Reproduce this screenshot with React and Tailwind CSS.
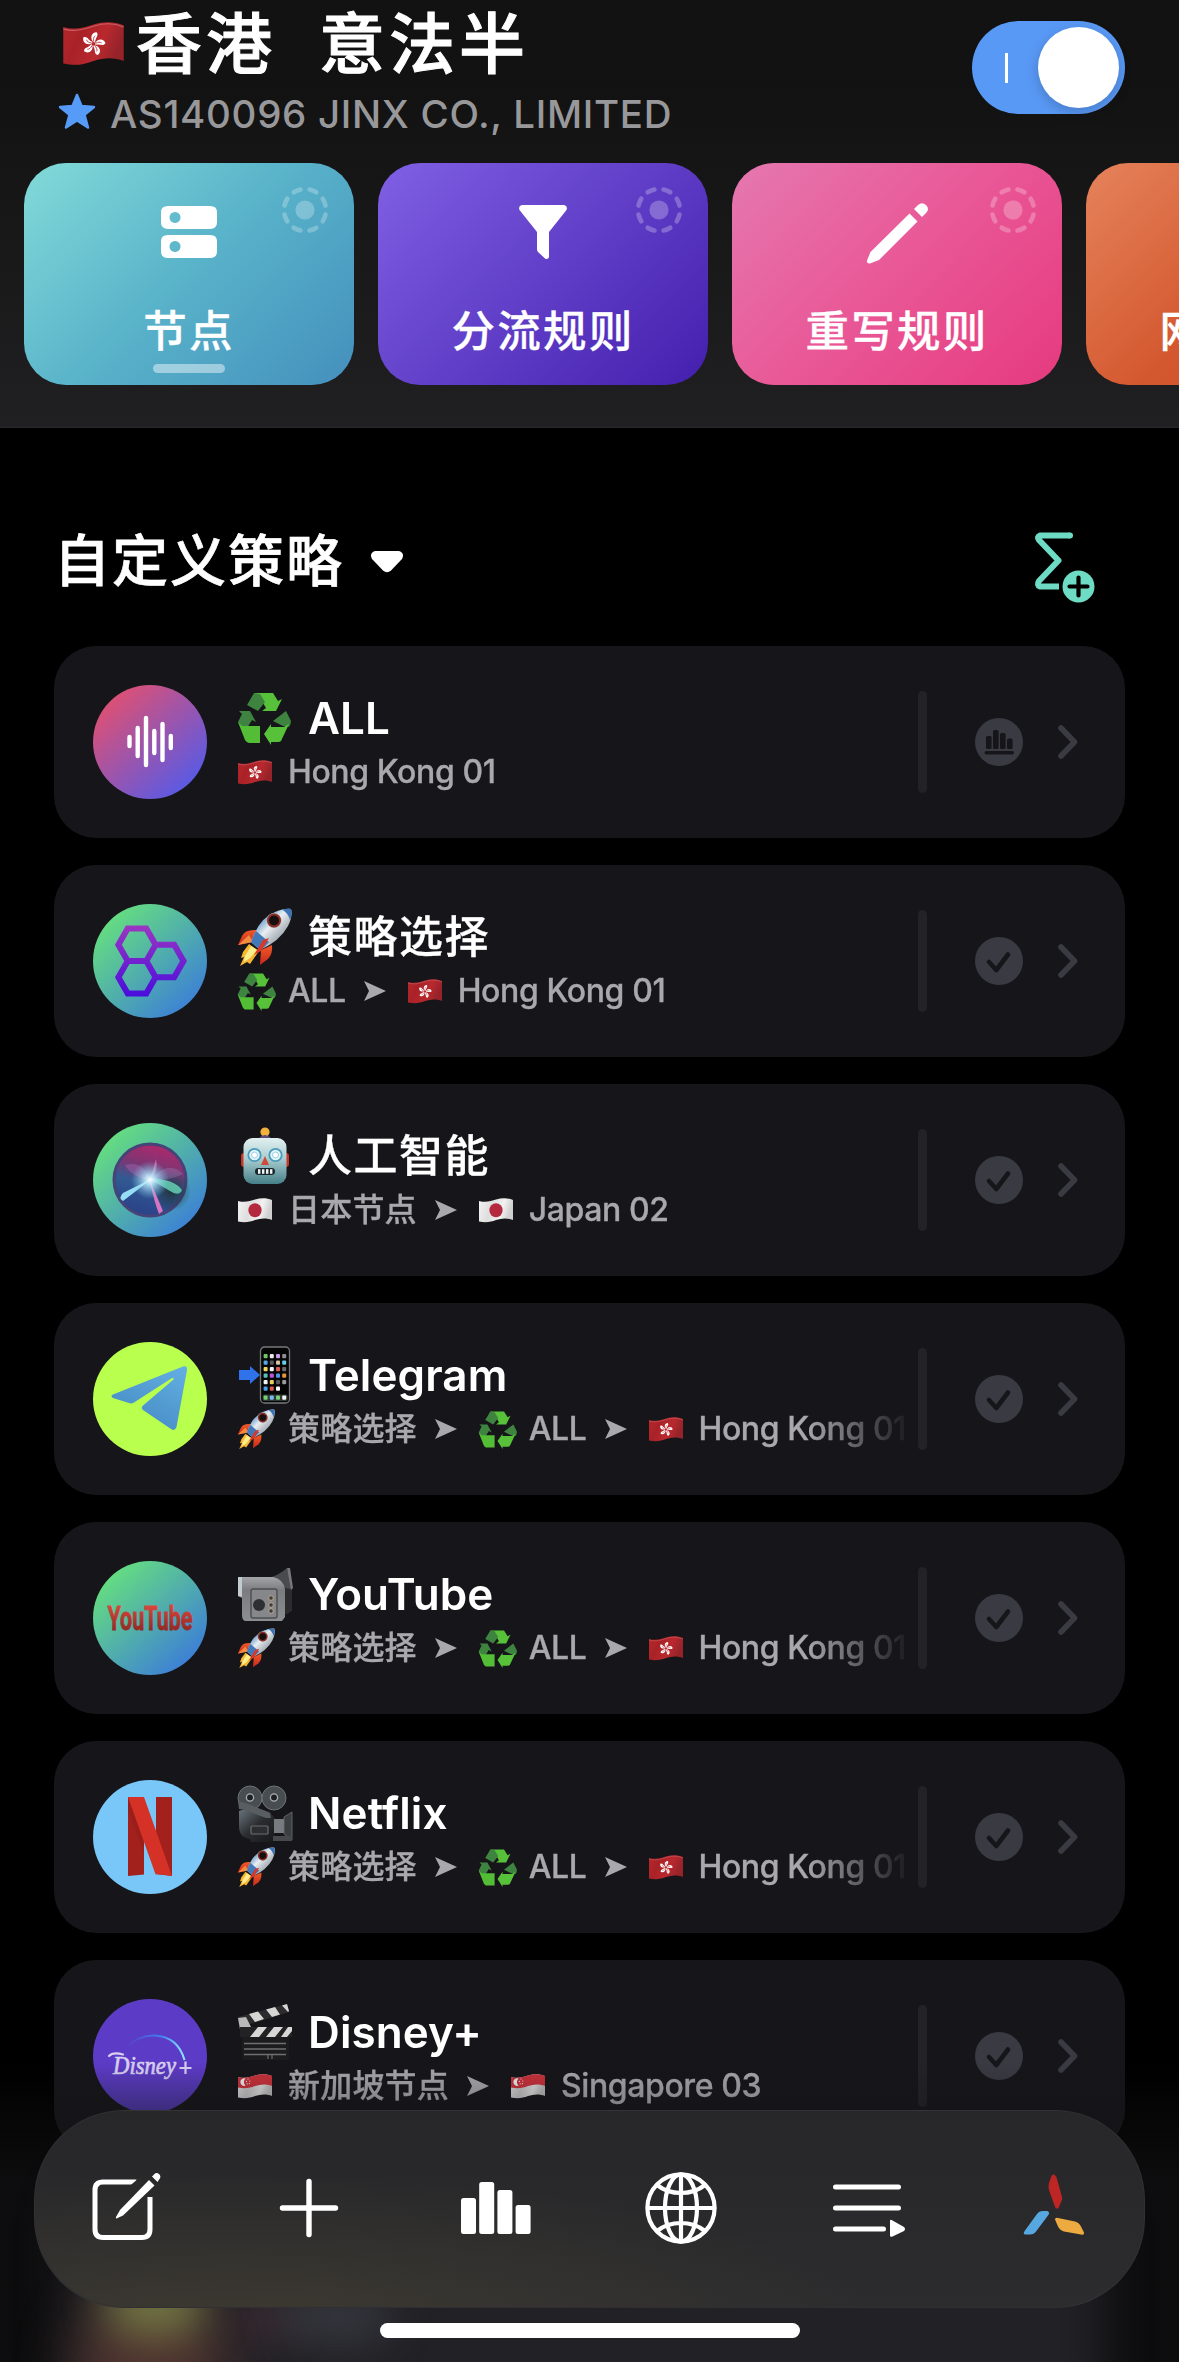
import React from "react";

const FONT = "font-['Inter','Noto_Sans_CJK_SC',sans-serif]";

/* ---------- flags and emoji ---------- */

const WAVE = "M1 4 C8 6 13 4 18 2.5 C24 .6 30 .8 35 3 V23 C30 21 24 21 18 23 C13 25 8 26 1 24.5Z";

function FlagHK({ className }) {
  return (
    <svg viewBox="0 0 36 27" className={className}>
      <defs>
        <linearGradient id="hk" x1="0" y1="0" x2="1" y2="0.3">
          <stop offset="0" stopColor="#b5272c" />
          <stop offset="0.35" stopColor="#a92227" />
          <stop offset="0.7" stopColor="#b9292e" />
          <stop offset="1" stopColor="#97232a" />
        </linearGradient>
      </defs>
      <path d={WAVE} fill="url(#hk)" />
      <path d="M1 5 C8 7 13 5 18 3.5 C24 1.6 30 1.8 35 4" fill="none" stroke="#d4777b" strokeWidth="0.6" opacity="0.7" />
      {[0, 72, 144, 216, 288].map((a) => (
        <g key={a} transform={`translate(18 13.4) rotate(${a + 8}) scale(0.86)`}>
          <path d="M0 -1 C-3 -3 -2.6 -7.2 1 -7.8 C3 -5.8 0.6 -4.6 0.9 -1.2Z" fill="#fff" />
          <path d="M0 -1.4 C-.8 -3 -.4 -4.6 .4 -5.4" fill="none" stroke="#b5272c" strokeWidth="0.5" />
        </g>
      ))}
    </svg>
  );
}

function FlagJP({ className }) {
  return (
    <svg viewBox="0 0 36 27" className={className}>
      <defs>
        <linearGradient id="jp" x1="0" y1="0" x2="1" y2="0.2">
          <stop offset="0" stopColor="#f4f4f4" />
          <stop offset="0.4" stopColor="#dedede" />
          <stop offset="0.75" stopColor="#f1f1f1" />
          <stop offset="1" stopColor="#cfcfcf" />
        </linearGradient>
      </defs>
      <path d={WAVE} fill="url(#jp)" />
      <ellipse cx="18" cy="13.3" rx="6.6" ry="7" fill="#b5293f" />
    </svg>
  );
}

function FlagSG({ className }) {
  return (
    <svg viewBox="0 0 36 27" className={className}>
      <defs>
        <linearGradient id="sgw" x1="0" y1="0" x2="1" y2="0.2">
          <stop offset="0" stopColor="#dedede" />
          <stop offset="0.4" stopColor="#c4c3c4" />
          <stop offset="0.75" stopColor="#dddddd" />
          <stop offset="1" stopColor="#b9b9b9" />
        </linearGradient>
      </defs>
      <path d={WAVE} fill="url(#sgw)" />
      <path d="M1 4 C8 6 13 4 18 2.5 C24 .6 30 .8 35 3 V13 C30 11 24 11 18 13 C13 15 8 16 1 14.5Z" fill="#c8323b" />
      <path d="M8.6 5.6 A3.8 3.8 0 1 0 8.6 12.6 A4.4 4.4 0 0 1 8.6 5.6Z" fill="#eee" />
      {[[11, 6], [9.4, 8.4], [12.8, 8], [10.2, 10.8], [12.4, 10.6]].map(([x, y]) => (
        <circle key={`${x}-${y}`} cx={x} cy={y} r="0.6" fill="#eee" />
      ))}
    </svg>
  );
}

function Recycle({ className }) {
  return (
    <svg viewBox="0 0 54 54" className={className}>
      <path d="M17 2 H36 L41 10 L45 8 L39 20 H25 L29 17 L22 5Z" fill="#57c139" />
      <path d="M17 2 L23 3 L28 11 L21 20 L10 14Z" fill="#3f8341" />
      <path d="M2 20 L13 20 L19 31 L15 29 L10 37 H4 L1 31 L5 23Z" fill="#3f8341" />
      <path d="M1 31 L5 35 H23 V52 H12 Q10 52 8 49Z" fill="#52bd35" />
      <path d="M49 20 L54 30 Q54 33 52 36 L46 35 L36 30Z" fill="#3f8341" />
      <path d="M52 33 L44 50 Q43 51 41 51 H34 V54 L27 43 L34 33 V36 H47Z" fill="#57c139" />
    </svg>
  );
}

function Rocket({ className }) {
  return (
    <svg viewBox="0 0 56 58" className={className}>
      <defs>
        <linearGradient id="rk" x1="0" y1="0" x2="1" y2="1">
          <stop offset="0.2" stopColor="#4a86bd" />
          <stop offset="0.45" stopColor="#e9eef2" />
          <stop offset="0.62" stopColor="#b9c0c6" />
          <stop offset="0.85" stopColor="#8795a5" />
        </linearGradient>
        <linearGradient id="rf" x1="0" y1="0" x2="0" y2="1">
          <stop offset="0" stopColor="#f05a28" />
          <stop offset="1" stopColor="#c9261c" />
        </linearGradient>
      </defs>
      <path d="M20 22 Q8 21 5 28 L1 37 L16 34Z" fill="url(#rf)" />
      <path d="M35 37 Q36 46 31 51 L23 57 L24 42Z" fill="url(#rf)" />
      <path d="M1 37 L12 27 L16 34Z" fill="#f58a3c" />
      <path d="M12 36 L6 44 L4 50 L7 49 L3 58 L10 54 L13 56 L22 43Z" fill="#f8b632" />
      <path d="M14 38 L8 48 L7 54 L13 50 L20 42Z" fill="#fdee8d" />
      <path d="M14 34 Q22 10 38 4 Q48 0 54 1 Q56 8 51 18 Q43 33 23 42Z" fill="url(#rk)" />
      <path d="M45 1.6 Q50 .4 54 1 Q55.5 6 53 12 Q51 5 45 1.6Z" fill="#3b73b4" />
      <path d="M14 34 Q16 28 19 23 L32 34 Q28 39 23 42Z" fill="#4379b8" />
      <circle cx="37" cy="12.5" r="7.4" fill="#a6a9ae" />
      <circle cx="37" cy="12.5" r="6" fill="#17100f" stroke="#8c2d25" strokeWidth="2" />
      <path d="M26 32 L17 47 L24 43 L32 30Z" fill="#d8372a" />
    </svg>
  );
}

function Robot({ className }) {
  return (
    <svg viewBox="0 0 56 58" className={className}>
      <defs>
        <linearGradient id="rb" x1="0" y1="0" x2="0" y2="1">
          <stop offset="0" stopColor="#e2f0f0" />
          <stop offset="0.45" stopColor="#a9cdd0" />
          <stop offset="1" stopColor="#467f88" />
        </linearGradient>
      </defs>
      <rect x="4" y="26" width="48" height="14" rx="3" fill="#c93429" />
      <circle cx="28" cy="5" r="4.6" fill="#f3b13c" />
      <path d="M22 11 Q28 5 34 11 V14 H22Z" fill="#5f4a75" />
      <rect x="6.5" y="11" width="43" height="46" rx="9" fill="url(#rb)" />
      {[17.5, 38.5].map((x) => (
        <g key={x}>
          <circle cx={x} cy="28" r="6.2" fill="#dff5fb" stroke="#4b9ab9" strokeWidth="1.8" />
          <circle cx={x} cy="28" r="3" fill="#fff" stroke="#9dd0e2" strokeWidth="1" />
        </g>
      ))}
      <path d="M28 29 L32 38 H24Z" fill="#ce4a3a" />
      <rect x="18" y="41" width="20" height="7" rx="3.4" fill="#16282c" />
      {[21, 25, 29, 33].map((x) => (
        <rect key={x} x={x} y="42.2" width="2.4" height="4.6" fill="#f4f4f4" />
      ))}
    </svg>
  );
}

const APP_COLORS = [
  "#72c465", "#e9e9e9", "#c79be6", "#8f8f92", "#54a9e8", "#5a5a5e", "#d5c2a4", "#63cfe8",
  "#f2d65d", "#f5f5f5", "#dd5b50", "#6b6b6e", "#58bdbb", "#bd55d8", "#5393e4", "#e6943a",
  "#f0f0f0", "#e8ce60", "#57575a", "#98989a", "#4c9fe8", "#dc5b4c", "#ffffff", "#050505",
];

function PhoneArrow({ className }) {
  return (
    <svg viewBox="0 0 56 58" className={className}>
      <rect x="23.5" y="1" width="29" height="56" rx="4" fill="#050505" stroke="#77787a" strokeWidth="1.3" />
      {APP_COLORS.map((c, i) => (
        <rect key={i} x={26.6 + (i % 4) * 6.2} y={8 + Math.floor(i / 4) * 6.5} width="4" height="4.3" rx="1" fill={c} />
      ))}
      <rect x="25.6" y="48.5" width="25" height="6.5" rx="1.5" fill="#2c3a33" />
      {["#77cf75", "#7ab8ef", "#7ed07a", "#f3f3f3"].map((c, i) => (
        <rect key={c + i} x={26.6 + i * 6.2} y="49.6" width="4" height="4.2" rx="1" fill={c} />
      ))}
      <path d="M2 24 H13 V20 L23 29 L13 38 V34 H2Z" fill="#2f72ea" />
    </svg>
  );
}

function Camcorder({ className }) {
  return (
    <svg viewBox="0 0 56 58" className={className}>
      <defs>
        <linearGradient id="cc" x1="0" y1="0" x2="0" y2="1">
          <stop offset="0" stopColor="#a3a5a8" />
          <stop offset="0.3" stopColor="#7a7c80" />
          <stop offset="1" stopColor="#8c8e91" />
        </linearGradient>
      </defs>
      <path d="M47 22 H55 V46 L50 49 H46Z" fill="#2c2c2f" />
      <path d="M32 13 Q42 10 50 3 L55 24 Q47 24 43 19 L33 18Z" fill="#4a4b4e" />
      <path d="M50 3 L53 3 L56 23 L54 25Z" fill="#77787b" />
      <path d="M1 12 H36 Q46 14 48 24 V52 L45 56 H8 Q5 55 5 50 V33 L1 31Z" fill="url(#cc)" />
      <path d="M1 12 H5 V32 L1 31Z" fill="#c3cbd2" />
      <rect x="14" y="24" width="26" height="29" rx="2" fill="#85878a" stroke="#4c4d50" strokeWidth="1.4" />
      <circle cx="22" cy="40" r="6" fill="#2e2f32" />
      {[33, 40, 46].map((y) => (
        <circle key={y} cx="34" cy={y} r="2.3" fill="#3d3e40" stroke="#c9b28c" strokeWidth="0.8" />
      ))}
    </svg>
  );
}

function MovieCamera({ className }) {
  return (
    <svg viewBox="0 0 56 58" className={className}>
      <defs>
        <linearGradient id="mc" x1="0" y1="0" x2="1" y2="1">
          <stop offset="0" stopColor="#6c7780" />
          <stop offset="0.5" stopColor="#2a2c2f" />
          <stop offset="1" stopColor="#18191b" />
        </linearGradient>
      </defs>
      <circle cx="13" cy="14" r="12" fill="#474d51" stroke="#6d7377" />
      <circle cx="37" cy="14" r="12" fill="#474d51" stroke="#6d7377" />
      <circle cx="13" cy="13.5" r="3.6" fill="#1e2022" stroke="#aab0b4" strokeWidth="1.3" />
      <circle cx="37" cy="13.5" r="3.6" fill="#1e2022" stroke="#aab0b4" strokeWidth="1.3" />
      <path d="M2 27 Q14 21 33 28 L38 35 V56 L34 58 H14 L13 55 Q2 54 2 42Z" fill="url(#mc)" />
      <path d="M1 17 L14 21 L33 29 L34 34 L29 34 L8 26 L2 25Z" fill="#585e62" />
      <rect x="37" y="35" width="11" height="14" fill="#777c80" />
      <path d="M47 33 L55 28 V56 L47 50Z" fill="#3b3e41" stroke="#6c7073" strokeWidth="0.8" />
      <path d="M36 52 H55 V57 H36Z" fill="#47494c" />
      <rect x="14" y="42" width="17" height="8" rx="1" fill="#2c2e30" stroke="#6a6c6f" strokeWidth="1.2" />
    </svg>
  );
}

function Clapper({ className }) {
  return (
    <svg viewBox="0 0 56 58" className={className}>
      <path d="M1 14 L50 1 L52 9 L4 24Z" fill="#2c2c2e" />
      <path d="M12 11 L21 8.5 L27 16 L18 19Z M29 6.4 L38 4 L43 11.5 L35 14Z M45 2.6 L50 1 L52 8 L51 9Z" fill="#d6d5d3" />
      <path d="M1 15 L9 14 L14 24 V32 H4Z" fill="#b8b8b8" />
      <rect x="3" y="24" width="52" height="10" fill="#222224" />
      <path d="M21 24 H30 L22 34 H13Z M37 24 H46 L38 34 H29Z M51 24 H55 V28 L50 34 H44Z" fill="#d8d7d5" />
      <path d="M5 34 H52 V55 Q52 57 50 57 H8 Q5 57 5 54Z" fill="#1c1c1e" />
      <path d="M7 40.5 H49 M7 46 H49 M7 51.5 H49" stroke="#6f6f71" strokeWidth="1.4" />
      <path d="M31 51.5 V56 M35 51.5 V56" stroke="#6f6f71" strokeWidth="1.2" />
    </svg>
  );
}

/* ---------- round policy icons ---------- */

function Gradient({ id, from, to }) {
  return (
    <linearGradient id={id} x1="0.12" y1="0.1" x2="0.85" y2="0.88">
      <stop offset="0" stopColor={from} />
      <stop offset="1" stopColor={to} />
    </linearGradient>
  );
}

function Disc({ children }) {
  return (
    <svg viewBox="0 0 114 114" className="h-[114px] w-[114px] shrink-0">
      {children}
    </svg>
  );
}

function IconAll() {
  const bars = [[36.5, 50, 63], [44.7, 41, 73], [53, 31, 82], [61.3, 44, 70], [69.5, 37, 77], [77.8, 49, 65]];
  return (
    <Disc>
      <defs><Gradient id="g-all" from="#e15071" to="#5a5ae4" /></defs>
      <circle cx="57" cy="57" r="57" fill="url(#g-all)" />
      {bars.map(([x, a, b]) => (
        <line key={x} x1={x} x2={x} y1={a + 2} y2={b - 2} stroke="#fff" strokeWidth="4.4" strokeLinecap="round" />
      ))}
    </Disc>
  );
}

const hex = (cx, cy) =>
  `M${cx - 18.6} ${cy} L${cx - 9.3} ${cy - 16.2} H${cx + 9.3} L${cx + 18.6} ${cy} L${cx + 9.3} ${cy + 16.2} H${cx - 9.3}Z`;

function IconHex() {
  return (
    <Disc>
      <defs>
        <Gradient id="g-hex" from="#66e07e" to="#3d82d4" />
        <linearGradient id="g-hexline" gradientUnits="userSpaceOnUse" x1="0" y1="22" x2="0" y2="92">
          <stop offset="0" stopColor="#9b36c2" />
          <stop offset="1" stopColor="#4a0ddc" />
        </linearGradient>
      </defs>
      <circle cx="57" cy="57" r="57" fill="url(#g-hex)" />
      <path d={`${hex(44, 40.8)} ${hex(44, 73.2)} ${hex(71.9, 57)}`} fill="none" stroke="url(#g-hexline)" strokeWidth="6" />
    </Disc>
  );
}

function IconSiri() {
  return (
    <Disc>
      <defs>
        <Gradient id="g-siri" from="#66e07e" to="#3d82d4" />
        <linearGradient id="orb" x1="0.6" y1="0" x2="0.35" y2="1">
          <stop offset="0" stopColor="#b0286c" />
          <stop offset="0.3" stopColor="#7e3573" />
          <stop offset="0.55" stopColor="#315a92" />
          <stop offset="1" stopColor="#2a4088" />
        </linearGradient>
        <radialGradient id="orbglow">
          <stop offset="0" stopColor="#fff" />
          <stop offset="0.25" stopColor="#c5f1ff" stopOpacity="0.85" />
          <stop offset="1" stopColor="#7cc6ee" stopOpacity="0" />
        </radialGradient>
        <radialGradient id="orbdark">
          <stop offset="0" stopColor="#21363f" />
          <stop offset="1" stopColor="#21363f" stopOpacity="0" />
        </radialGradient>
      </defs>
      <circle cx="57" cy="57" r="57" fill="url(#g-siri)" />
      <circle cx="57" cy="57" r="36" fill="url(#orb)" stroke="#454377" strokeWidth="3" />
      <circle cx="78" cy="68" r="20" fill="url(#orbdark)" />
      <path d="M32 42 Q50 37 57 57 Q38 54 32 42Z" fill="#b766b2" opacity="0.4" />
      <path d="M57 57 Q75 36 90 51 Q76 58 57 57Z" fill="#957aaf" opacity="0.4" />
      <path d="M60 55 L30 78 Q25 75 30 70Z" fill="#9be6fa" opacity="0.95" />
      <path d="M55 55 Q82 56 89 67 Q86 74 77 68Z" fill="#64d0b3" opacity="0.85" />
      <path d="M56 55 L70 88 L66 91 Q61 78 56 55Z" fill="#ea7ac9" opacity="0.9" />
      <path d="M57 57 L63 36 Q66 47 57 57Z" fill="#df92c6" opacity="0.6" />
      <circle cx="57" cy="57" r="19" fill="url(#orbglow)" />
    </Disc>
  );
}

function IconTelegram() {
  return (
    <Disc>
      <defs>
        <linearGradient id="g-tg" x1="1" y1="0" x2="0.4" y2="1">
          <stop offset="0" stopColor="#63b0e4" />
          <stop offset="1" stopColor="#468cc4" />
        </linearGradient>
      </defs>
      <circle cx="57" cy="57" r="57" fill="#b9ff4e" />
      <path
        d="M20 52.5 L90 24.5 Q94.5 23 94 28 L83.5 85 Q82 89.5 78 87 L50 68 Q47.500 66 50 63.500 L80.500 37.500 Q81.500 35.500 79 36 L41 60.500 Q38.500 62 36 61 L20 56 Q17 54 20 52.500Z"
        fill="url(#g-tg)"
      />
    </Disc>
  );
}

function IconYouTube() {
  return (
    <Disc>
      <defs>
        <Gradient id="g-yt" from="#66e07e" to="#3d7fd6" />
        <linearGradient id="g-yttext" x1="0" y1="0" x2="0" y2="1">
          <stop offset="0.15" stopColor="#e0473d" />
          <stop offset="0.85" stopColor="#8c2722" />
        </linearGradient>
      </defs>
      <circle cx="57" cy="57" r="57" fill="url(#g-yt)" />
      <text
        x="14.500" y="69" textLength="85" lengthAdjust="spacingAndGlyphs"
        className="font-['Roboto',sans-serif] text-[34px] font-bold"
        fill="url(#g-yttext)" stroke="url(#g-yttext)" strokeWidth="0.8"
      >
        YouTube
      </text>
    </Disc>
  );
}

function IconNetflix() {
  return (
    <Disc>
      <circle cx="57" cy="57" r="57" fill="#79c7f8" />
      <path d="M35 17 H51 V94.500 Q43 95 35 96Z" fill="#a3211d" />
      <path d="M63 17 H79 V96 L63 94Z" fill="#a3211d" />
      <path d="M35 17 L51 60 V72 L35 30Z" fill="#8f1d19" opacity="0.5" />
      <path d="M35 17 H51 L79 96 Q70 94.500 62.500 94.300Z" fill="#d53127" />
    </Disc>
  );
}

function IconDisney() {
  return (
    <Disc>
      <defs>
        <linearGradient id="arc" x1="0" y1="0" x2="1" y2="0">
          <stop offset="0" stopColor="#5b3cc4" />
          <stop offset="0.6" stopColor="#3f7ff0" />
          <stop offset="1" stopColor="#8fe9ff" />
        </linearGradient>
        <linearGradient id="g-dis" x1="0" y1="0" x2="0" y2="1">
          <stop offset="0.600" stopColor="#5c3bc6" />
          <stop offset="1" stopColor="#4d37a5" />
        </linearGradient>
      </defs>
      <circle cx="57" cy="57" r="57" fill="url(#g-dis)" />
      <path d="M33 49 Q45 36 62 36.500 Q85 38 91.500 61" fill="none" stroke="url(#arc)" strokeWidth="2" />
      <path d="M16 57 Q20 52.500 30 55.500" fill="none" stroke="#d9d0f2" strokeWidth="2.200" strokeLinecap="round" />
      <text
        x="20" y="74.500" textLength="63" lengthAdjust="spacingAndGlyphs"
        className="font-['Liberation_Serif',serif] text-[26px] font-normal italic"
        fill="#d9d0f2" stroke="#d9d0f2" strokeWidth="0.7"
      >
        Disney
      </text>
      <path d="M92.500 62.500 V75 M86.500 69 H98.500" stroke="#d9d0f2" strokeWidth="2.200" />
    </Disc>
  );
}

/* ---------- small interface glyphs ---------- */

function Arrow() {
  return (
    <svg viewBox="0 0 22 20" className="mr-[21px] ml-[18px] h-[20px] w-[22px] shrink-0">
      <path d="M0 0 L22 10 L0 20 L5 10Z" fill="#a9a8ad" />
    </svg>
  );
}

function Target() {
  const r = 21;
  return (
    <svg viewBox="0 0 48 48" className="absolute top-[23px] right-[25px] h-12 w-12 opacity-25">
      <circle cx="24" cy="24" r="9.600" fill="#fff" />
      {[0, 1, 2, 3, 4, 5, 6, 7].map((i) => {
        const a = ((i * 45 + 22.5 - 10) * Math.PI) / 180;
        const b = ((i * 45 + 22.5 + 10) * Math.PI) / 180;
        return (
          <path
            key={i}
            d={`M${24 + r * Math.cos(a)} ${24 + r * Math.sin(a)} A${r} ${r} 0 0 1 ${24 + r * Math.cos(b)} ${24 + r * Math.sin(b)}`}
            fill="none" stroke="#fff" strokeWidth="4.600" strokeLinecap="round"
          />
        );
      })}
    </svg>
  );
}

function ServerGlyph() {
  return (
    <svg viewBox="0 0 64 64" className="h-16 w-16">
      <path
        fillRule="evenodd" fill="#fff"
        d="M11 6 H53 Q60 6 60 12 V22.500 Q60 29 53 29 H11 Q4 29 4 22.500 V12 Q4 6 11 6Z M18 12 a5.500 5.500 0 1 0 .01 0Z M11 35 H53 Q60 35 60 41 V51.500 Q60 58 53 58 H11 Q4 58 4 51.500 V41 Q4 35 11 35Z M18 41 a5.500 5.500 0 1 0 .01 0Z"
      />
    </svg>
  );
}

function FunnelGlyph() {
  return (
    <svg viewBox="0 0 64 64" className="h-16 w-16">
      <path d="M11 5 H53 Q57 6 55.500 10 L38 32 V57 Q37 60 34 58.500 L27 52 Q26 51 26 49 V32 L8.500 10 Q7 6 11 5Z" fill="#fff" />
    </svg>
  );
}

function PencilGlyph() {
  return (
    <svg viewBox="0 0 64 64" className="h-16 w-16">
      <path d="M44.500 13.500 L52.500 21.500 L14 60 L5 63.500 Q1.500 64 2 60.500 L5.500 52Z" fill="#fff" />
      <path d="M49 9 L53 5 Q57 1.500 61 5 Q65 9 61 13 L57 17Z" fill="#fff" />
    </svg>
  );
}

function FeatureCard({ label, glyph, active, tone }) {
  return (
    <div className={`relative flex h-[222px] w-[330px] shrink-0 flex-col items-center rounded-[42px] bg-linear-[135deg] pt-[37px] ${tone}`}>
      <Target />
      <div className="flex h-16 items-center">{glyph}</div>
      <div className="mt-[37px] text-[43.500px] leading-[60px] font-medium tracking-[2.200px] whitespace-nowrap [-webkit-text-stroke:0.300px_white]">{label}</div>
      {active && <div className="mt-[3px] h-[9px] w-[72px] rounded-full bg-white/45" />}
    </div>
  );
}

function Sub({ icon, text }) {
  return (
    <>
      <span className="flex w-[51px] shrink-0 items-center">{icon}</span>
      <span className={/^[A-Z]/.test(text) ? "tracking-[-0.400px]" : "tracking-[0.200px]"}>{text}</span>
    </>
  );
}

const flagCls = "h-[27px] w-[36px]";
const smallCls = "h-[40px] w-[39px]";
const titleCls = "h-[58px] w-[56px]";

const hk = { icon: <FlagHK className={flagCls} />, text: "Hong Kong 01" };
const all = { icon: <Recycle className="h-[39px] w-[39px]" />, text: "ALL" };
const choose = { icon: <Rocket className={smallCls} />, text: "策略选择" };

const ROWS = [
  { disc: <IconAll />, icon: <Recycle className="h-[54px] w-[54px]" />, title: "ALL", path: [hk], chart: true },
  { disc: <IconHex />, icon: <Rocket className={titleCls} />, title: "策略选择", cjk: true, path: [all, hk] },
  {
    disc: <IconSiri />, icon: <Robot className={titleCls} />, title: "人工智能", cjk: true,
    path: [{ icon: <FlagJP className={flagCls} />, text: "日本节点" }, { icon: <FlagJP className={flagCls} />, text: "Japan 02" }],
  },
  { disc: <IconTelegram />, icon: <PhoneArrow className={titleCls} />, title: "Telegram", path: [choose, all, hk] },
  { disc: <IconYouTube />, icon: <Camcorder className={titleCls} />, title: "YouTube", path: [choose, all, hk] },
  { disc: <IconNetflix />, icon: <MovieCamera className={titleCls} />, title: "Netflix", path: [choose, all, hk] },
  {
    disc: <IconDisney />, icon: <Clapper className={titleCls} />, title: "Disney+",
    path: [{ icon: <FlagSG className={flagCls} />, text: "新加坡节点" }, { icon: <FlagSG className={flagCls} />, text: "Singapore 03" }],
  },
];

function Status({ chart }) {
  return (
    <svg viewBox="0 0 48 48" className="h-12 w-12 shrink-0">
      <circle cx="24" cy="24" r="24" fill="#3a3a43" />
      {chart ? (
        <g fill="#16161a">
          <rect x="11" y="18" width="5.600" height="13" rx="1.500" />
          <rect x="18" y="12" width="5.600" height="19" rx="1.500" />
          <rect x="25" y="15" width="5.600" height="16" rx="1.500" />
          <rect x="32" y="20.500" width="5.600" height="10.500" rx="1.500" />
          <rect x="9.500" y="33" width="29.500" height="3.400" rx="1.700" />
        </g>
      ) : (
        <path d="M14 25 L21.300 33 L33 17.500" fill="none" stroke="#16161a" strokeWidth="4.600" strokeLinecap="round" strokeLinejoin="round" />
      )}
    </svg>
  );
}

function PolicyRow({ row }) {
  return (
    <div className="flex h-[192px] shrink-0 items-center overflow-hidden rounded-[42px] bg-[#16161a] pl-[39px]">
      {row.disc}
      <div className="ml-[30px] flex w-[669px] shrink-0 flex-col overflow-hidden mask-r-from-[85%] mask-r-to-[101%] pt-[6px]">
        <div className="flex h-[54px] items-center text-[44px] leading-[54px] text-white">
          <span className="flex w-[71px] shrink-0">{row.icon}</span>
          <span className={row.cjk ? "font-medium tracking-[1.500px] [-webkit-text-stroke:0.300px_white]" : "font-semibold tracking-[0.100px]"}>{row.title}</span>
        </div>
        <div className="flex h-[54px] items-center text-[32px] leading-[54px] font-medium whitespace-nowrap text-[#a9a8ad] [-webkit-text-stroke:0.300px_#a9a8ad]">
          {row.path.map((p, i) => (
            <React.Fragment key={i}>
              {i > 0 && <Arrow />}
              <Sub icon={p.icon} text={p.text} />
            </React.Fragment>
          ))}
        </div>
      </div>
      <div className="ml-[12px] h-[102px] w-[9px] shrink-0 rounded-full bg-[#232327]" />
      <div className="ml-12 flex items-center gap-[34px]">
        <Status chart={row.chart} />
        <svg viewBox="0 0 22 36" className="h-9 w-[22px]">
          <path d="M4 4 L17.500 18 L4 32" fill="none" stroke="#3a3a43" strokeWidth="5.600" strokeLinecap="round" strokeLinejoin="round" />
        </svg>
      </div>
    </div>
  );
}

/* ---------- tab bar ---------- */

function ComposeGlyph() {
  return (
    <svg viewBox="0 0 74 74" className="mt-[-3px] h-[74px] w-[74px]">
      <path d="M46.500 13 H13 Q5 13 5 21 V60 Q5 68.500 13 68.500 H52 Q60 68.500 60 60 V28" fill="none" stroke="#fff" strokeWidth="5" />
      <path d="M50 8 L58 16 L45 29 L34 22Z" fill="#2b2b2b" />
      <path d="M59 11 L64.500 16.500 L33 46.500 L26.500 49.500 Q25.500 49.500 26 48 L30 41Z" fill="#fff" />
      <path d="M62 7.500 L64.500 5 Q66.500 3 69 5 Q71.500 7.500 69.500 10 L67.500 13Z" fill="#fff" />
    </svg>
  );
}

function GlobeGlyph() {
  return (
    <svg viewBox="0 0 72 72" className="h-[72px] w-[72px]" fill="none" stroke="#fff" strokeWidth="4.200">
      <circle cx="36" cy="36" r="33.600" />
      <ellipse cx="36" cy="36" rx="16" ry="33.600" />
      <path d="M36 2 V70 M2 36 H70 M12 13 Q22 21 36 21 Q50 21 60 13 M12 59 Q22 51 36 51 Q50 51 60 59" />
    </svg>
  );
}

export default function App() {
  return (
    <div className={`relative flex h-[2362px] w-[1179px] flex-col overflow-hidden bg-black text-white ${FONT}`}>
      <header className="flex h-[428px] shrink-0 flex-col border-b border-[#29292b] bg-linear-to-b from-[#121212] from-20% to-[#202022]">
        <div className="flex h-[163px] items-start justify-between pr-[54px] pl-[58px]">
          <div className="flex flex-col">
            <div className="flex h-[88px] items-center pl-[3px]">
              <FlagHK className="h-[48px] w-[65px]" />
              <span className="ml-[10px] text-[66px] leading-[88px] font-medium tracking-[4px] [-webkit-text-stroke:1px_white]">香港</span>
              <span className="ml-[43px] text-[66px] leading-[88px] font-medium tracking-[4px] [-webkit-text-stroke:1px_white]">意法半</span>
            </div>
            <div className="flex h-[52px] items-center">
              <svg viewBox="0 0 38 37" className="mt-[-6px] h-[37px] w-[38px]">
                <path d="M19 2 L23.500 13 L36 14 L26.500 21.800 L30 34.500 L19 27.500 L8 34.500 L11.500 21.800 L2 14 L14.500 13Z" fill="#579bf8" stroke="#579bf8" strokeWidth="2.500" strokeLinejoin="round" />
              </svg>
              <span className="ml-[14px] text-[38.500px] leading-[52px] font-medium tracking-[0.700px] whitespace-nowrap text-[#98989b]">AS140096 JINX CO., LIMITED</span>
            </div>
          </div>
          <div className="mt-[21px] flex h-[93px] w-[153px] items-center justify-between rounded-full bg-[#5999f6] pr-[6px] pl-[33px]">
            <div className="h-[30px] w-[3px] bg-white" />
            <div className="h-[81px] w-[81px] rounded-full bg-white shadow-[0_4px_14px_rgba(0,0,0,0.2)]" />
          </div>
        </div>
        <div className="flex gap-6 overflow-hidden pl-6">
          <FeatureCard label="节点" glyph={<ServerGlyph />} active tone="from-[#82dad8] via-[#58b2c9] to-[#4490bd]" />
          <FeatureCard label="分流规则" glyph={<FunnelGlyph />} tone="from-[#8060e4] via-[#613fc8] to-[#441fae]" />
          <FeatureCard label="重写规则" glyph={<PencilGlyph />} tone="from-[#e578b0] via-[#e95796] to-[#e63a7f]" />
          <FeatureCard label="网络活动" tone="from-[#e5835b] via-[#d4582f] to-[#c04522]" />
        </div>
      </header>

      <main className="flex flex-col px-[54px] pt-[86px]">
        <div className="flex h-[94px] items-center">
          <h1 className="text-[56px] leading-[94px] font-medium tracking-[2px] [-webkit-text-stroke:0.700px_white]">自定义策略</h1>
          <svg viewBox="0 0 34 24" className="mt-[2px] ml-[26px] h-6 w-[34px]">
            <path d="M5 1 H29 Q35 3 32 9 L21 20.500 Q17 24 13 20.500 L2 9 Q-1 3 5 1Z" fill="#fff" />
          </svg>
          <svg viewBox="0 0 64 74" className="mt-[11px] mr-[29px] ml-auto h-[74px] w-16">
            <path d="M38 5.500 H8 Q4.500 7 7 10 L26.500 30.500 L7 51 Q4.500 55 8 56.500 H27" fill="none" stroke="#6edcc4" strokeWidth="6" strokeLinejoin="round" />
            <circle cx="38" cy="5.500" r="3" fill="#6edcc4" />
            <circle cx="46.500" cy="56.500" r="16" fill="#6edcc4" />
            <path d="M37.500 56.500 H55.500 M46.500 47.500 V65.500" stroke="#000" strokeWidth="4.200" strokeLinecap="round" />
          </svg>
        </div>
        <div className="mt-[38px] flex flex-col gap-[27px]">
          {ROWS.map((row) => (
            <PolicyRow key={row.title} row={row} />
          ))}
        </div>
      </main>

      <div className="absolute inset-x-0 bottom-0 h-[300px] bg-linear-to-b from-transparent to-[#121214]/70 to-40%" />
      <div className="absolute bottom-[-60px] left-[64px] h-[240px] w-[1040px] rounded-[50px] bg-[#222126] blur-[22px]" />
      <div className="absolute bottom-[-90px] left-[76px] h-[160px] w-[150px] rounded-full bg-[#6a4036]/60 blur-[28px]" />
      <div className="absolute bottom-[28px] left-[105px] h-[60px] w-[100px] rounded-full bg-[#8a964e]/70 blur-[20px]" />
      <div className="absolute bottom-[20px] left-[235px] h-[50px] w-[60px] rounded-full bg-[#653847]/30 blur-[18px]" />
      <div className="absolute bottom-[20px] left-[280px] h-[50px] w-[110px] rounded-full bg-[#4a4e58]/50 blur-[20px]" />

      <nav className="absolute top-[2110px] left-[34px] flex h-[198px] w-[1111px] items-center rounded-[90px] border border-white/[0.04] bg-linear-to-b from-[#272729] to-[#2c2c2e] pb-[3px] pl-[55px]">
        <div className="absolute inset-0 rounded-[90px] bg-[radial-gradient(ellipse_at_18%_110%,rgba(84,76,54,0.42),transparent_50%)]" />
        <div className="relative"><ComposeGlyph /></div>
        <svg viewBox="0 0 60 60" className="relative ml-[115px] h-[60px] w-[60px]">
          <path d="M30 3.500 V56.500 M3.500 30 H56.500" stroke="#fff" strokeWidth="5.400" strokeLinecap="round" />
        </svg>
        <svg viewBox="0 0 70 54" className="relative ml-[122px] h-[54px] w-[70px]" fill="#fff">
          <rect x="0" y="17" width="15" height="36" rx="2.500" />
          <rect x="18.200" y="1" width="15" height="52" rx="2.500" />
          <rect x="36.400" y="9" width="15" height="44" rx="2.500" />
          <rect x="54.600" y="24" width="15" height="29" rx="2.500" />
        </svg>
        <div className="relative ml-[114px]"><GlobeGlyph /></div>
        <svg viewBox="0 0 74 58" className="relative ml-[114px] h-[58px] w-[74px]">
          <path d="M4.500 8 H67.500 M4.500 29 H67.500 M4.500 50 H52.500" stroke="#fff" strokeWidth="5" strokeLinecap="round" />
          <path d="M59 42 Q59 40 61.500 41.500 L73 48 Q75 50 73 52 L61.500 57.500 Q59 58.500 59 56.500Z" fill="#fff" />
        </svg>
        <svg viewBox="0 0 62 64" className="relative mt-[-3px] ml-[118px] h-16 w-[62px]">
          <path d="M30.500 0.500 Q33 1 34 5 L39 23 Q39.500 26 38 28 L35.500 34 Q33.500 36 32 33 L26 16 Q25 13 26 9 L28.500 2 Q29.500 0 30.500 0.500Z" fill="#bd2624" />
          <path d="M20 37 H24.500 Q27.500 38.500 25 41.500 L13 57.500 Q11 60.500 7 60.500 H2 Q-.5 59.500 2 56.500 L14 40 Q16 37 20 37Z" fill="#57a8e0" />
          <path d="M32 45.500 Q32 43 35 44 L52 47.500 Q56 48.500 58 52.500 L61 58.500 Q61.500 61.500 58 60.500 L41 57.500 Q37 56.500 35 52.500Z" fill="#ecaa40" />
        </svg>
      </nav>
      <div className="absolute top-[2323px] left-[380px] h-[15px] w-[420px] rounded-full bg-white" />
    </div>
  );
}
